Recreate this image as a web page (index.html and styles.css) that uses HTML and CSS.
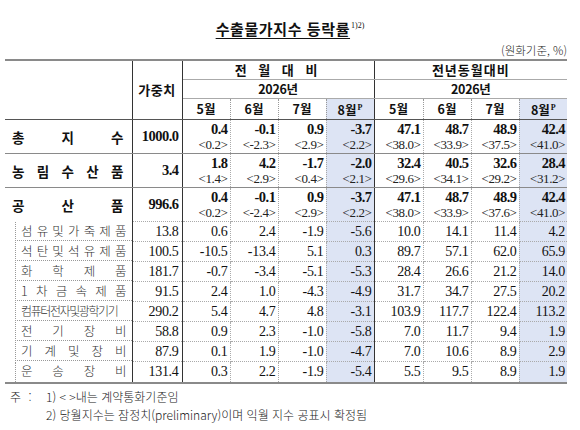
FILE: index.html
```html
<!DOCTYPE html>
<html lang="ko">
<head>
<meta charset="utf-8">
<title>수출물가지수 등락률</title>
<link rel="stylesheet" href="styles.css">
</head>
<body>
<div class="page">
  <div class="title-row"><h1 class="title"><span class="ul">수출물가지수 등락률</span><sup class="tsup">1)2)</sup></h1></div>
  <div class="unit">(원화기준, %)</div>
  <table class="tbl">
    <colgroup>
      <col class="c-lab"><col class="c-wt">
      <col class="c-d"><col class="c-d"><col class="c-d"><col class="c-d">
      <col class="c-d2"><col class="c-d"><col class="c-d"><col class="c-d">
    </colgroup>
    <thead>
      <tr class="hr1">
        <th rowspan="3" class="h-blank"></th>
        <th rowspan="3" class="h-wt">가중치</th>
        <th colspan="4" class="grp sepR">전 월 대 비</th>
        <th colspan="4" class="grp2">전년동월대비</th>
      </tr>
      <tr class="hr2">
        <th colspan="4" class="sepR">2026년</th>
        <th colspan="4">2026년</th>
      </tr>
      <tr class="hr3">
        <th class="m">5월</th><th class="m">6월</th><th class="m">7월</th><th class="m hl sepR">8월<sup>P</sup></th>
        <th class="m">5월</th><th class="m">6월</th><th class="m">7월</th><th class="m hl last">8월<sup>P</sup></th>
      </tr>
    </thead>
    <tbody>
      <tr class="main">
        <td class="mlab"><div class="dist">총 지 수</div></td>
        <td class="w">1000.0</td>
        <td class="v"><b>0.4</b><i>&lt;0.2&gt;</i></td>
        <td class="v"><b>-0.1</b><i>&lt;-2.3&gt;</i></td>
        <td class="v"><b>0.9</b><i>&lt;2.9&gt;</i></td>
        <td class="v hl sepR"><b>-3.7</b><i>&lt;2.2&gt;</i></td>
        <td class="v"><b>47.1</b><i>&lt;38.0&gt;</i></td>
        <td class="v"><b>48.7</b><i>&lt;33.9&gt;</i></td>
        <td class="v"><b>48.9</b><i>&lt;37.5&gt;</i></td>
        <td class="v hl last"><b>42.4</b><i>&lt;41.0&gt;</i></td>
      </tr>
      <tr class="main">
        <td class="mlab"><div class="dist">농 림 수 산 품</div></td>
        <td class="w">3.4</td>
        <td class="v"><b>1.8</b><i>&lt;1.4&gt;</i></td>
        <td class="v"><b>4.2</b><i>&lt;2.9&gt;</i></td>
        <td class="v"><b>-1.7</b><i>&lt;0.4&gt;</i></td>
        <td class="v hl sepR"><b>-2.0</b><i>&lt;2.1&gt;</i></td>
        <td class="v"><b>32.4</b><i>&lt;29.6&gt;</i></td>
        <td class="v"><b>40.5</b><i>&lt;34.1&gt;</i></td>
        <td class="v"><b>32.6</b><i>&lt;29.2&gt;</i></td>
        <td class="v hl last"><b>28.4</b><i>&lt;31.2&gt;</i></td>
      </tr>
      <tr class="main mlast">
        <td class="mlab"><div class="dist">공 산 품</div></td>
        <td class="w">996.6</td>
        <td class="v"><b>0.4</b><i>&lt;0.2&gt;</i></td>
        <td class="v"><b>-0.1</b><i>&lt;-2.4&gt;</i></td>
        <td class="v"><b>0.9</b><i>&lt;2.9&gt;</i></td>
        <td class="v hl sepR"><b>-3.7</b><i>&lt;2.2&gt;</i></td>
        <td class="v"><b>47.1</b><i>&lt;38.0&gt;</i></td>
        <td class="v"><b>48.7</b><i>&lt;33.9&gt;</i></td>
        <td class="v"><b>48.9</b><i>&lt;37.6&gt;</i></td>
        <td class="v hl last"><b>42.4</b><i>&lt;41.0&gt;</i></td>
      </tr>
      <tr class="sub">
        <td class="slab"><div class="sbox"><span class="dist">섬 유 및 가 죽 제 품</span></div></td>
        <td class="w">13.8</td><td>0.6</td><td>2.4</td><td>-1.9</td><td class="hl sepR">-5.6</td><td>10.0</td><td>14.1</td><td>11.4</td><td class="hl last">4.2</td>
      </tr>
      <tr class="sub">
        <td class="slab"><div class="sbox"><span class="dist">석 탄 및 석 유 제 품</span></div></td>
        <td class="w">100.5</td><td>-10.5</td><td>-13.4</td><td>5.1</td><td class="hl sepR">0.3</td><td>89.7</td><td>57.1</td><td>62.0</td><td class="hl last">65.9</td>
      </tr>
      <tr class="sub">
        <td class="slab"><div class="sbox"><span class="dist">화 학 제 품</span></div></td>
        <td class="w">181.7</td><td>-0.7</td><td>-3.4</td><td>-5.1</td><td class="hl sepR">-5.3</td><td>28.4</td><td>26.6</td><td>21.2</td><td class="hl last">14.0</td>
      </tr>
      <tr class="sub">
        <td class="slab"><div class="sbox"><span class="dist">1 차 금 속 제 품</span></div></td>
        <td class="w">91.5</td><td>2.4</td><td>1.0</td><td>-4.3</td><td class="hl sepR">-4.9</td><td>31.7</td><td>34.7</td><td>27.5</td><td class="hl last">20.2</td>
      </tr>
      <tr class="sub">
        <td class="slab"><div class="sbox"><span class="dist tight">컴퓨터전자및광학기기</span></div></td>
        <td class="w">290.2</td><td>5.4</td><td>4.7</td><td>4.8</td><td class="hl sepR">-3.1</td><td>103.9</td><td>117.7</td><td>122.4</td><td class="hl last">113.2</td>
      </tr>
      <tr class="sub">
        <td class="slab"><div class="sbox"><span class="dist">전 기 장 비</span></div></td>
        <td class="w">58.8</td><td>0.9</td><td>2.3</td><td>-1.0</td><td class="hl sepR">-5.8</td><td>7.0</td><td>11.7</td><td>9.4</td><td class="hl last">1.9</td>
      </tr>
      <tr class="sub">
        <td class="slab"><div class="sbox"><span class="dist">기 계 및 장 비</span></div></td>
        <td class="w">87.9</td><td>0.1</td><td>1.9</td><td>-1.0</td><td class="hl sepR">-4.7</td><td>7.0</td><td>10.6</td><td>8.9</td><td class="hl last">2.9</td>
      </tr>
      <tr class="sub slast">
        <td class="slab"><div class="sbox"><span class="dist">운 송 장 비</span></div></td>
        <td class="w">131.4</td><td>0.3</td><td>2.2</td><td>-1.9</td><td class="hl sepR">-5.4</td><td>5.5</td><td>9.5</td><td>8.9</td><td class="hl last">1.9</td>
      </tr>
    </tbody>
  </table>
  <div class="notes">
    <div class="note"><span class="nlead">주 :</span><span class="ntext">1) &lt; &gt;내는 계약통화기준임</span></div>
    <div class="note"><span class="nlead"></span><span class="ntext">2) 당월지수는 잠정치(preliminary)이며 익월 지수 공표시 확정됨</span></div>
  </div>
</div>
</body>
</html>
```

FILE: styles.css
```css
html, body {
  margin: 0;
  padding: 0;
  background: #ffffff;
}

.page {
  width: 580px;
  padding: 15px 0 0 5px;
  box-sizing: border-box;
  color: #111;
  font-family: "Noto Sans CJK KR", "Noto Sans", sans-serif;
}

.title-row {
  display: flex;
  justify-content: center;
  height: 22px;
  padding-right: 5px;
}

.title {
  margin: 0;
  font-size: 15px;
  font-weight: 700;
  line-height: 22px;
  letter-spacing: 0.6px;
}

.title .ul {
  text-decoration: underline;
  text-underline-offset: 3px;
  text-decoration-thickness: 1px;
}

.tsup {
  font-size: 8px;
  font-weight: 400;
  vertical-align: 7px;
  letter-spacing: 0;
  margin-left: 1px;
  font-family: "Liberation Serif", serif;
}

.unit {
  width: 562px;
  text-align: right;
  font-size: 11.5px;
  font-weight: 300;
  line-height: 18px;
  height: 18px;
  margin-top: 4px;
  color: #222;
}

.tbl {
  width: 562px;
  table-layout: fixed;
  border-collapse: collapse;
  border-top: 2px solid #8a8a8a;
  border-bottom: 2px solid #8a8a8a;
}

.c-lab { width: 127px; }
.c-wt { width: 50px; }
.c-d { width: 48px; }
.c-d2 { width: 49px; }

th, td {
  padding: 0;
}

thead th {
  font-weight: 700;
  font-size: 12.5px;
  line-height: 18px;
  height: 18px;
  text-align: center;
  color: #111;
}

.h-blank {
  border-right: 1px solid #333;
  border-bottom: 1px solid #555;
}

.h-wt {
  border-right: 1px solid #333;
  border-bottom: 1px solid #555;
  font-size: 13px;
  letter-spacing: 0.5px;
}

.hr1 th.grp, .hr1 th.grp2 {
  border-bottom: 1px solid #aaa;
  font-size: 13px;
}

.hr1 th.grp {
  letter-spacing: 4px;
}

.hr1 th.grp2 {
  letter-spacing: 1px;
}

.hr2 th {
  border-bottom: 1px solid #aaa;
  font-weight: 700;
  letter-spacing: -0.3px;
}

.hr3 th {
  border-bottom: 1px solid #555;
  border-right: 1px dotted #999;
}

.hr3 th sup {
  font-size: 8px;
  vertical-align: 5px;
  font-family: "Liberation Serif", serif;
  margin-left: 1px;
}

.sepR {
  border-right: 1px solid #333 !important;
}

.last {
  border-right: none !important;
}

.hl {
  background: #dde4f4;
}

/* main rows */
.main td {
  height: 33px;
  border-bottom: 1px solid #8a8a8a;
  border-right: 1px dotted #aaa;
  vertical-align: middle;
}

.main.mlast td {
  border-bottom: 1px dotted #aaa;
}

.main td.mlab {
  border-right: 1px solid #333;
  border-bottom: 1px solid #8a8a8a;
  padding: 0 8px 0 7px;
}

.main.mlast td.mlab {
  border-bottom: none;
}

.dist {
  display: block;
  text-align: justify;
  text-align-last: justify;
}

.main .dist {
  font-size: 13.5px;
  font-weight: 700;
  line-height: 18px;
}

.main td.w {
  border-right: 1px solid #333;
  text-align: right;
  padding-right: 3px;
  font-family: "Liberation Serif", serif;
  font-weight: 700;
  font-size: 14.5px;
  letter-spacing: -0.5px;
}

.main td.v {
  text-align: right;
  padding-right: 2px;
  font-family: "Liberation Serif", serif;
}

.v b {
  display: block;
  font-weight: 700;
  font-size: 14.5px;
  line-height: 16px;
  letter-spacing: -0.5px;
}

.v i {
  display: block;
  font-style: normal;
  font-size: 13px;
  line-height: 16px;
  color: #222;
  letter-spacing: -0.4px;
}

/* sub rows */
.sub td {
  height: 19px;
  border-bottom: 1px dotted #aaa;
  border-right: 1px dotted #aaa;
  text-align: right;
  padding-right: 2px;
  font-family: "Liberation Serif", serif;
  font-size: 14px;
  line-height: 18px;
  color: #111;
  letter-spacing: -0.3px;
}

.sub.slast td {
  border-bottom: none;
}

.sub td.w {
  border-right: 1px solid #333;
  padding-right: 3px;
}

.sub td.slab {
  padding: 0;
  border-bottom: none;
  border-right: 1px solid #333;
  vertical-align: top;
}

.sbox {
  margin-left: 10px;
  height: 19px;
  border-left: 1px dotted #999;
  border-bottom: 1px dotted #999;
  padding: 0 5px 0 5px;
  box-sizing: border-box;
  overflow: hidden;
}

.sub.slast .sbox {
  border-bottom: none;
  height: 20px;
}

.sbox .dist {
  font-family: "Noto Sans CJK KR", sans-serif;
  font-weight: 300;
  font-size: 12.5px;
  line-height: 18px;
  letter-spacing: 0;
  word-spacing: -3px;
  white-space: nowrap;
  color: #333;
}

.sbox .tight {
  letter-spacing: -1.4px;
  text-align: left;
  text-align-last: left;
  font-size: 12px;
}

/* notes */
.notes {
  margin-top: 4px;
  font-size: 12px;
  font-weight: 300;
  line-height: 18px;
  color: #222;
}

.note {
  display: flex;
}

.nlead {
  width: 41px;
  padding-left: 5px;
  box-sizing: border-box;
  flex: none;
  letter-spacing: 2px;
}

.ntext {
  letter-spacing: 0;
}
```
